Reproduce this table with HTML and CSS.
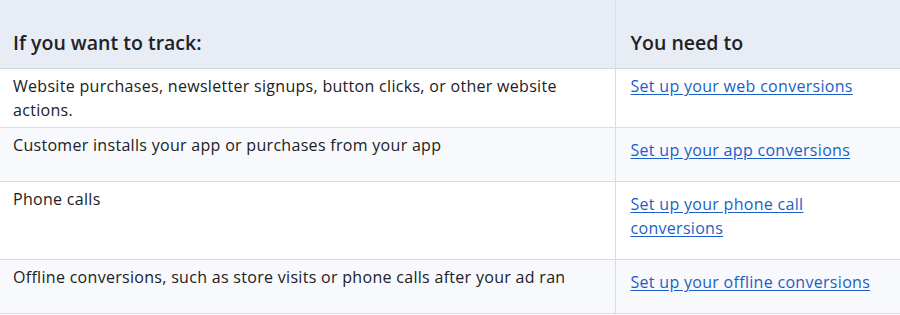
FILE: index.html
```html
<!DOCTYPE html>
<html lang="en">
<head>
    <meta charset="UTF-8">
    <title>Conversion tracking</title>
    <link rel="stylesheet" href="styles.css">
</head>
<body>
    <table class="track-table">
        <thead>
            <tr>
                <th class="col-what">If you want to track:</th>
                <th class="col-how">You need to</th>
            </tr>
        </thead>
        <tbody>
            <tr>
                <td>Website purchases, newsletter signups, button clicks, or other website actions.</td>
                <td class="link-cell first"><a href="#">Set up your web conversions</a></td>
            </tr>
            <tr class="alt">
                <td>Customer installs your app or purchases from your app</td>
                <td class="link-cell"><a href="#">Set up your app conversions</a></td>
            </tr>
            <tr>
                <td>Phone calls</td>
                <td class="link-cell"><a href="#">Set up your phone call conversions</a></td>
            </tr>
            <tr class="alt">
                <td>Offline conversions, such as store visits or phone calls after your ad ran</td>
                <td class="link-cell"><a href="#">Set up your offline conversions</a></td>
            </tr>
        </tbody>
    </table>
</body>
</html>
```

FILE: styles.css
```css
* {
    box-sizing: border-box;
}

body {
    margin: 0;
    background: #ffffff;
    color: #202124;
    font-family: "Open Sans", Roboto, "Liberation Sans", sans-serif;
    overflow: hidden;
}

/* Table */
.track-table {
    width: 900px;
    border-collapse: collapse;
    table-layout: fixed;
    font-size: 16px;
    line-height: 24px;
    letter-spacing: 0.3px;
}

.track-table th {
    background: #e8ecf4;
    text-align: left;
    font-weight: 600;
    font-size: 19.5px;
    line-height: 24px;
    letter-spacing: 0;
    padding: 31px 13px 13px;
    border-bottom: 1px solid #d3d7df;
}

.col-what {
    width: 615px;
}

.track-table th.col-how {
    padding-left: 15px;
}

.track-table td {
    vertical-align: top;
    padding: 5px 24px 5px 13px;
    border-bottom: 1px solid #dadce0;
}

.track-table th + th,
.track-table td + td {
    border-left: 1px solid #dadce0;
}

.track-table tr.alt td {
    background: #f8f9fc;
}

/* Link column */
.track-table td.link-cell {
    padding: 10px 16px 19px 15px;
}

.track-table td.link-cell.first {
    padding-top: 5px;
}

.link-cell a {
    color: #1a5fc8;
    text-decoration: underline;
    text-underline-offset: 2px;
}
```
